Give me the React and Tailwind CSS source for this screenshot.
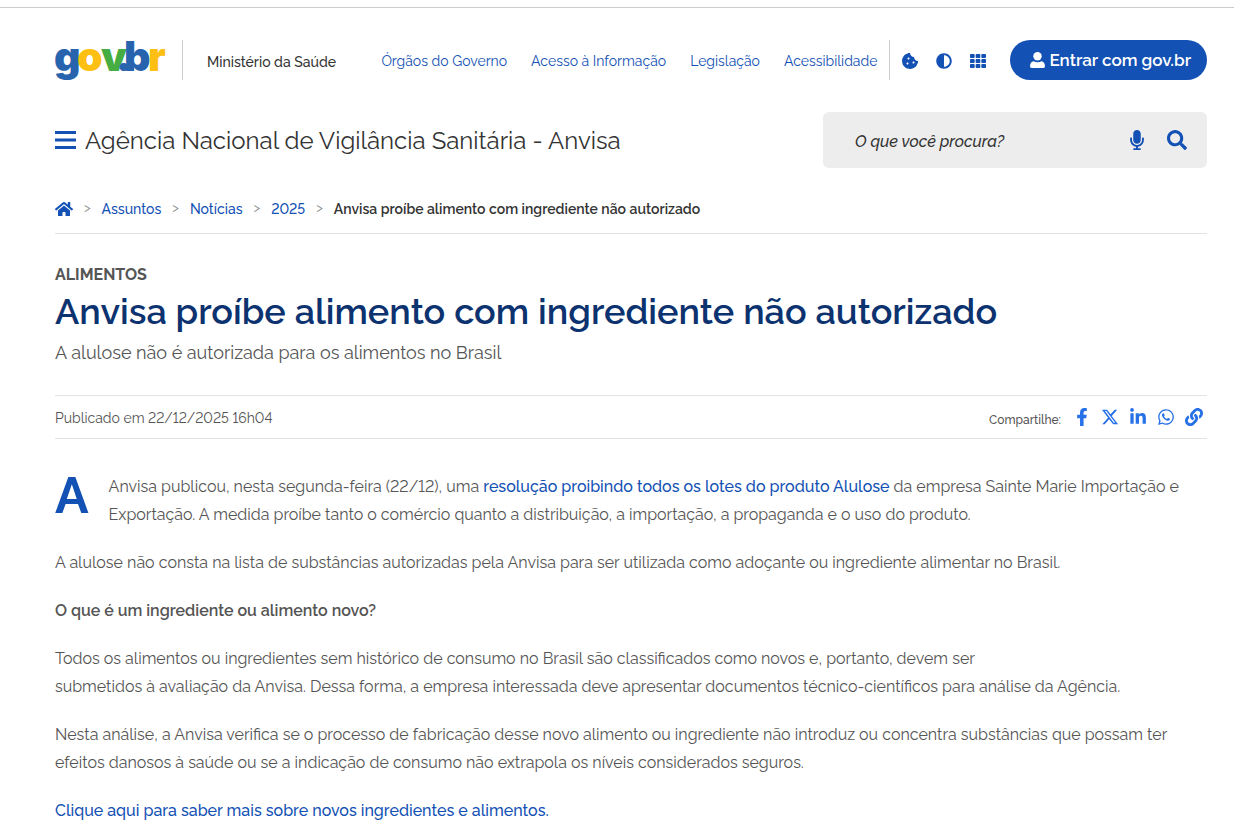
import React from "react";
import {
  FaAdjust,
  FaCookieBite,
  FaFacebookF,
  FaHome,
  FaLink,
  FaLinkedinIn,
  FaMicrophone,
  FaSearch,
  FaTh,
  FaWhatsapp,
} from "react-icons/fa";
import { FaXTwitter } from "react-icons/fa6";

const NAV_LINKS = [
  "Órgãos do Governo",
  "Acesso à Informação",
  "Legislação",
  "Acessibilidade",
];

const TOOLS = [
  { label: "Cookies", Icon: FaCookieBite },
  { label: "Alto contraste", Icon: FaAdjust },
  { label: "Sistemas", Icon: FaTh },
];

const CRUMBS = ["Assuntos", "Notícias", "2025"];

const SHARE = [
  { label: "Facebook", Icon: FaFacebookF },
  { label: "X", Icon: FaXTwitter },
  { label: "LinkedIn", Icon: FaLinkedinIn },
  { label: "WhatsApp", Icon: FaWhatsapp },
  { label: "Copiar link", Icon: FaLink },
];

const Logo = () => (
  <svg
    width="111"
    height="42"
    viewBox="0 0 111 42"
    role="img"
    aria-label="gov.br"
    className="overflow-visible font-['Inter',sans-serif] text-[41px] font-black"
  >
    <text y="31">
      <tspan x="-1" fill="#2864ae">g</tspan>
      <tspan x="22" fill="#fdbf12">o</tspan>
      <tspan x="46" fill="#45ad42">v</tspan>
      <tspan x="61" fill="#2864ae">.</tspan>
      <tspan x="69" fill="#2864ae">b</tspan>
      <tspan x="93" fill="#fdbf12">r</tspan>
    </text>
  </svg>
);

const MenuIcon = () => (
  <svg width="21" height="18" viewBox="0 0 21 18" fill="currentColor">
    <rect width="21" height="3" />
    <rect y="7.5" width="21" height="3" />
    <rect y="15" width="21" height="3" />
  </svg>
);

const UserIcon = () => (
  <svg width="15" height="16" viewBox="0 0 15 16" fill="currentColor">
    <circle cx="7.5" cy="4.2" r="4.2" />
    <path d="M3.6 9.2Q7.5 11.4 11.4 9.2Q14.8 9.8 15 14.2Q15 16 13.4 16H1.6Q0 16 0 14.2Q0.2 9.8 3.6 9.2Z" />
  </svg>
);

const Header = () => (
  <header>
    <div className="flex h-10 items-center">
      <a href="#" className="flex h-10 items-start">
        <Logo />
      </a>
      <div className="ml-4 h-10 border-l border-[#cccccc]" />
      <span className="ml-6 pt-1 text-sm font-medium text-[#333333]">
        Ministério da Saúde
      </span>

      <nav className="ml-auto flex gap-6 pt-0.5 pr-3 text-sm text-[#1351b4]">
        {NAV_LINKS.map((link) => (
          <a key={link} href="#" className="whitespace-nowrap">
            {link}
          </a>
        ))}
      </nav>

      <div className="flex h-10 items-center gap-[18px] border-l border-[#cccccc] pt-0.5 pr-6 pl-3 text-base">
        {TOOLS.map(({ label, Icon }) => (
          <button key={label} aria-label={label} className="text-[#1351b4]">
            <Icon />
          </button>
        ))}
      </div>

      <button className="flex h-10 items-center gap-1 rounded-full bg-[#1351b4] pr-4 pl-5 font-semibold whitespace-nowrap text-white">
        <UserIcon />
        <span className="pt-0.5 text-[17px]">Entrar com gov.br</span>
      </button>
    </div>

    <div className="mt-8 flex items-center justify-between">
      <div className="flex items-center gap-[9px]">
        <button aria-label="Menu" className="text-[#1351b4]">
          <MenuIcon />
        </button>
        <a href="#" className="pt-0.5 text-2xl text-[#333333]">
          Agência Nacional de Vigilância Sanitária - Anvisa
        </a>
      </div>

      <form className="flex h-14 w-96 items-center rounded-md bg-[#ededed] pr-5 pl-8 text-[#1351b4]">
        <input
          type="text"
          aria-label="Buscar"
          placeholder="O que você procura?"
          className="min-w-0 flex-1 pt-1 text-base font-medium italic outline-none placeholder:text-[#333333]"
        />
        <button type="button" aria-label="Busca por voz" className="text-xl">
          <FaMicrophone />
        </button>
        <button type="button" aria-label="Pesquisar" className="ml-5 text-xl">
          <FaSearch />
        </button>
      </form>
    </div>
  </header>
);

const Separator = () => (
  <span className="text-[13px] font-normal text-[#888888]">&gt;</span>
);

const Breadcrumbs = () => (
  <nav className="mt-4 flex h-[50px] items-center gap-[11px] border-b border-[#e3e3e3] text-sm font-medium text-[#1351b4]">
    <a href="#" aria-label="Página inicial" className="text-lg">
      <FaHome />
    </a>
    {CRUMBS.map((crumb) => (
      <React.Fragment key={crumb}>
        <Separator />
        <a href="#">{crumb}</a>
      </React.Fragment>
    ))}
    <Separator />
    <span className="font-semibold text-[#333333]">
      Anvisa proíbe alimento com ingrediente não autorizado
    </span>
  </nav>
);

const App = () => {
  return (
    <div className="min-h-screen bg-white pt-[7px] font-['Raleway','Lato',sans-serif] text-[#555555] lining-nums">
      <div className="border-t border-[#cccccc] pt-8 pr-[27px] pl-[55px]">
        <Header />
        <Breadcrumbs />

        <main>
          <p className="mt-[29px] text-base leading-6 font-bold">ALIMENTOS</p>
          <h1 className="text-4xl leading-[48px] font-semibold text-[#0c326f]">
            Anvisa proíbe alimento com ingrediente não autorizado
          </h1>
          <p className="mt-1 text-lg leading-7">
            A alulose não é autorizada para os alimentos no Brasil
          </p>

          <div className="mt-7 flex h-11 items-center justify-between border-y border-[#e3e3e3]">
            <span className="pt-0.5 text-sm">
              Publicado em 22/12/2025 16h04
            </span>
            <div className="flex items-end">
              <span className="mr-3 text-xs leading-none font-medium">
                Compartilhe:
              </span>
              <div className="flex gap-2.5 pr-1 text-lg">
                {SHARE.map(({ label, Icon }) => (
                  <button key={label} aria-label={label} className="text-[#2670e8]">
                    <Icon />
                  </button>
                ))}
              </div>
            </div>
          </div>

          <article className="mt-[34px] space-y-5 pb-3 text-base leading-7">
            <div className="flex gap-5">
              <span className="text-[50px] leading-[46px] font-bold text-[#1351b4]">
                A
              </span>
              <p>
                Anvisa publicou, nesta segunda-feira (22/12), uma{" "}
                <a href="#" className="font-medium text-[#1351b4]">
                  resolução proibindo todos os lotes do produto Alulose
                </a>{" "}
                da empresa Sainte Marie Importação e Exportação. A medida proíbe
                tanto o comércio quanto a distribuição, a importação, a
                propaganda e o uso do produto.
              </p>
            </div>
            <p>
              A alulose não consta na lista de substâncias autorizadas pela
              Anvisa para ser utilizada como adoçante ou ingrediente alimentar
              no Brasil.
            </p>
            <p className="font-semibold">
              O que é um ingrediente ou alimento novo?
            </p>
            <p>
              Todos os alimentos ou ingredientes sem histórico de consumo no
              Brasil são classificados como novos e, portanto, devem ser
              <br />
              submetidos à avaliação da Anvisa. Dessa forma, a empresa
              interessada deve apresentar documentos técnico-científicos para
              análise da Agência.
            </p>
            <p>
              Nesta análise, a Anvisa verifica se o processo de fabricação desse
              novo alimento ou ingrediente não introduz ou concentra substâncias
              que possam ter efeitos danosos à saúde ou se a indicação de consumo
              não extrapola os níveis considerados seguros.
            </p>
            <p>
              <a href="#" className="font-medium text-[#1351b4]">
                Clique aqui para saber mais sobre novos ingredientes e alimentos.
              </a>
            </p>
          </article>
        </main>
      </div>
    </div>
  );
};

export default App;
